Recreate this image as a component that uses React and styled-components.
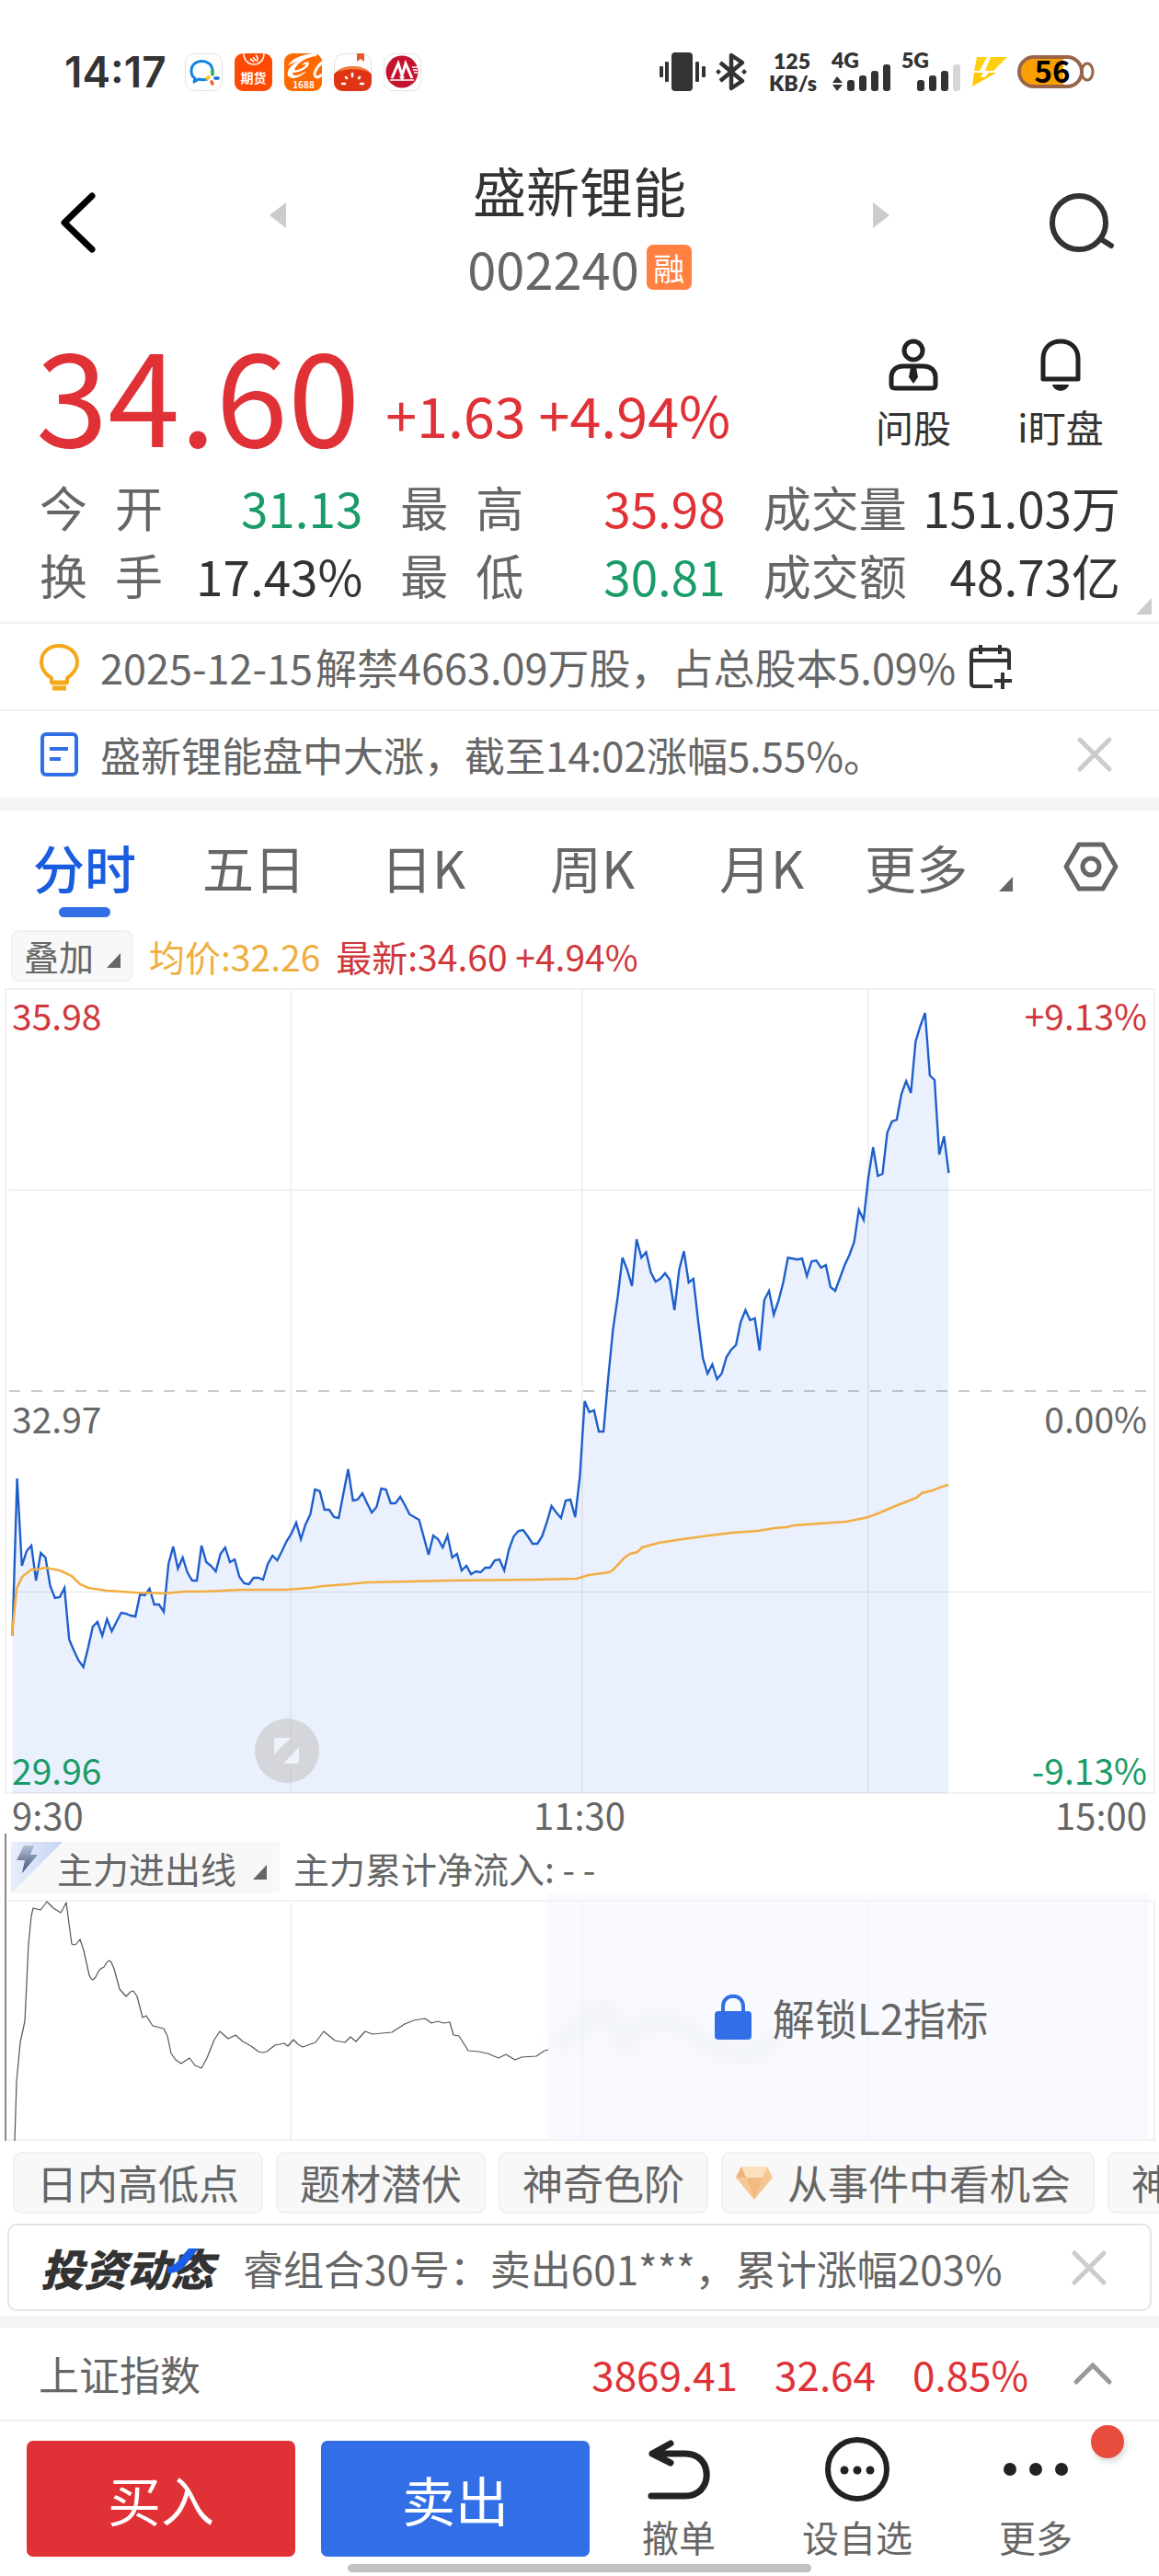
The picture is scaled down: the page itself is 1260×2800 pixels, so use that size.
import React, { useState } from 'react';
import styled, { createGlobalStyle } from 'styled-components';

const RED = '#df3136';
const GREEN = '#1a9c68';
const BLUE = '#326fe6';
const DARK = '#333';
const GREY = '#666';
const LINE = '#f1f1f1';

const GlobalStyle = createGlobalStyle`
  * {
    box-sizing: border-box;
  }

  body {
    margin: 0;
    background: #fff;
    color: ${DARK};
    font-family: 'Noto Sans CJK SC', sans-serif;
    overflow-x: hidden;
  }

  button {
    margin: 0;
    padding: 0;
    border: 0;
    background: none;
    color: inherit;
    font: inherit;
    cursor: pointer;
  }

  a {
    color: inherit;
    text-decoration: none;
  }

  svg {
    display: block;
    flex: none;
    overflow: visible;
  }
`;

const Page = styled.div`
  width: 100%;
  overflow: hidden;
`;

/* ---------- status bar ---------- */

const StatusBar = styled.div`
  display: flex;
  align-items: center;
  justify-content: space-between;
  height: 156px;
  padding: 0 70px;
  margin-bottom: 13px;
`;

const StatusGroup = styled.div`
  display: flex;
  align-items: center;
  gap: ${({ $gap }) => $gap}px;
`;

const Clock = styled.time`
  width: 118px;
  font: 600 46px/56px Inter, sans-serif;
`;

const NetSpeed = styled.div`
  width: 50px;
  margin: 0 8px 0 13px;
  text-align: center;
  font: 800 23px/24px Lato, sans-serif;
`;

const SignalLabel = styled.text`
  font: 800 23px Lato, sans-serif;
  fill: ${DARK};
`;

const IconLabel = styled.text`
  font: 700 ${({ $size }) => $size}px 'Noto Sans CJK SC', sans-serif;
  fill: #fff;
`;

const BatteryLabel = styled.text`
  font: 700 33px 'Noto Sans CJK SC', sans-serif;
  fill: #000;
`;

/* ---------- title ---------- */

const Header = styled.header`
  display: grid;
  grid-template-columns: 180fr 244fr 412fr 244fr 180fr;
  align-items: center;
  justify-items: center;
`;

const BackButton = styled.button`
  justify-self: start;
  padding-left: 64px;
`;

const SearchButton = styled.button`
  justify-self: end;
  padding-right: 48px;
`;

const Title = styled.div`
  padding-top: 6px;
`;

const StockName = styled.h1`
  margin: 0 0 29px;
  font-size: 58px;
  font-weight: 400;
  line-height: 62px;
  text-align: center;
`;

const StockCode = styled.div`
  display: flex;
  align-items: center;
  justify-content: center;
  gap: 8px;
  height: 49px;
  color: ${GREY};
  font-size: 56px;
`;

const Badge = styled.span`
  width: 49px;
  border-radius: 7px;
  background: #ff8041;
  color: #fff;
  font-size: 34px;
  line-height: 49px;
  text-align: center;
`;

/* ---------- quote ---------- */

const Quote = styled.section`
  display: flex;
  align-items: flex-end;
  padding: 40px 27px 0 39px;
  color: ${RED};
`;

const Price = styled.strong`
  font-size: 141px;
  font-weight: 400;
  line-height: 140px;
`;

const Change = styled.div`
  display: flex;
  flex: 1;
  gap: 14px;
  padding-left: 28px;
  font-size: 61px;
  line-height: 90px;
`;

const QuoteAction = styled.button`
  display: flex;
  flex-direction: column;
  align-items: center;
  gap: 18px;
  width: 160px;
  padding-bottom: 12px;
  color: ${DARK};
  font-size: 41px;
  line-height: 40px;
`;

const Stats = styled.dl`
  position: relative;
  display: grid;
  grid-template-columns: 351fr 353fr 388fr;
  column-gap: 41px;
  margin: 19px 0 0;
  padding: 0 42px 14px 43px;
  border-bottom: 2px solid ${LINE};
`;

const Stat = styled.div`
  display: flex;
  justify-content: space-between;
  line-height: 74px;
  white-space: nowrap;

  dt {
    display: flex;
    justify-content: space-between;
    min-width: 134px;
    color: ${GREY};
    font-size: 52px;
  }

  dd {
    margin: 0;
    color: ${({ $color }) => $color || DARK};
    font-size: 53px;
  }
`;

const Corner = styled.svg`
  position: absolute;
  right: 8px;
  bottom: 8px;
`;

/* ---------- notices ---------- */

const Notice = styled.div`
  display: flex;
  align-items: center;
  height: ${({ $dated }) => ($dated ? 95 : 94)}px;
  padding: 0 50px 0 42px;
  border-bottom: ${({ $dated }) => ($dated ? `2px solid ${LINE}` : '0')};
  color: ${GREY};
  font-size: ${({ $dated }) => ($dated ? 45 : 44)}px;
  white-space: nowrap;
`;

const NoticeLink = styled.a`
  display: flex;
  gap: 3px;
  padding: 0 14px 0 22px;
`;

const CloseButton = styled.button`
  margin-left: auto;
`;

const Band = styled.div`
  height: ${({ $size }) => $size}px;
  background: #f4f4f4;
`;

/* ---------- chart ---------- */

const Tabs = styled.nav`
  display: grid;
  grid-template-columns: repeat(5, 184fr) 212fr 128fr;
  padding-top: 26px;
`;

const Tab = styled.button`
  display: flex;
  flex-direction: column;
  align-items: center;
  gap: 9px;
  color: ${({ $active }) => ($active ? '#1a5ce0' : GREY)};
  font-size: 56px;
  font-weight: ${({ $active }) => ($active ? 500 : 400)};
  line-height: 70px;

  &::after {
    content: '';
    width: 56px;
    height: 11px;
    border-radius: 6px;
    background: ${({ $active }) => ($active ? BLUE : 'transparent')};
  }
`;

const MoreTab = styled.button`
  display: flex;
  align-items: center;
  gap: 34px;
  height: 70px;
  padding-left: 20px;
  color: ${GREY};
  font-size: 56px;
  line-height: 70px;
  white-space: nowrap;
`;

const SettingsTab = styled.button`
  display: flex;
  align-items: center;
  justify-content: center;
  height: 70px;
  padding-right: 20px;
`;

const Legend = styled.div`
  display: flex;
  align-items: center;
  gap: 17px;
  margin: 14px 12px 7px;
  font-size: 39px;
  line-height: 56px;
  white-space: nowrap;
`;

const LegendItem = styled.span`
  color: ${({ $color }) => $color};
`;

const Picker = styled.button`
  display: flex;
  align-items: center;
  gap: 14px;
  height: 56px;
  padding: 0 12px;
  border: 2px solid #f1f1f1;
  border-radius: 9px;
  background: #f8f8f8;
  color: ${GREY};
  font-size: 38px;
  line-height: 52px;
`;

const ChartBox = styled.div`
  position: relative;

  > svg {
    width: 100%;
    height: auto;
  }
`;

const Scale = styled.div`
  position: absolute;
  inset: 0 13px;
  display: grid;
  grid-template-rows: 1fr 1fr;
  color: ${GREY};
  font-size: 39px;
  line-height: 40px;
  pointer-events: none;
`;

const ScaleHalf = styled.div`
  display: flex;
  flex-direction: column;
  justify-content: space-between;
  padding: 9px 0 7px;
`;

const ScaleRow = styled.div`
  display: flex;
  justify-content: space-between;
  color: ${({ $color }) => $color};
`;

const ExpandButton = styled.button`
  position: absolute;
  left: 22%;
  bottom: 12px;
`;

const TimeAxis = styled.div`
  display: grid;
  grid-template-columns: 1fr auto 1fr;
  padding: 1px 13px 0;
  color: ${GREY};
  font-size: 40px;
  line-height: 42px;

  span:last-child {
    text-align: right;
  }
`;

const SubPanel = styled.section`
  margin-left: 5px;
  padding-top: 9px;
  border-left: 2px solid #8a8a8a;
`;

const SubHead = styled.div`
  display: flex;
  align-items: center;
  gap: 15px;
  padding: 0 5px 7px;
  color: ${GREY};
  font-size: 39px;
  line-height: 56px;
  white-space: nowrap;
`;

const FlowPicker = styled(Picker)`
  position: relative;
  gap: 18px;
  padding: 0 14px 0 50px;
  border: 0;
  border-radius: 4px;
  font-size: 39px;
`;

const FlowMark = styled.svg`
  position: absolute;
  top: 0;
  left: 0;
`;

const Unlock = styled.button`
  position: absolute;
  inset: -7px 12px 1px 47%;
  display: flex;
  align-items: center;
  justify-content: center;
  gap: 22px;
  padding-left: 6px;
  background: rgba(244, 247, 255, 0.6);
  color: ${GREY};
  font-size: 46px;
`;

/* ---------- chips, feed, index ---------- */

const Chips = styled.div`
  display: flex;
  gap: 14px;
  margin: 12px 0 11px 14px;
  overflow: hidden;
`;

const Chip = styled.button`
  display: flex;
  flex: none;
  align-items: center;
  gap: 16px;
  height: 67px;
  padding: 0 24px 0 ${({ $icon }) => ($icon ? 14 : 24)}px;
  border: 2px solid #f0f0f0;
  border-radius: 9px;
  background: #f8f8f8;
  color: ${GREY};
  font-size: 44px;
  line-height: 63px;
  white-space: nowrap;
`;

const Feed = styled.div`
  display: flex;
  align-items: center;
  gap: 32px;
  height: 95px;
  margin: 0 8px 6px;
  padding: 0 46px 0 34px;
  border: 2px solid #e5e5e5;
  border-radius: 10px;
  color: ${GREY};
  font-size: 44px;
  white-space: nowrap;
`;

const FeedLogo = styled.strong`
  position: relative;
  color: ${DARK};
  font-size: 47px;
  font-style: italic;
  font-weight: 900;

  svg {
    position: absolute;
    top: 14px;
    right: 16px;
  }
`;

const IndexRow = styled.button`
  display: flex;
  align-items: center;
  gap: 40px;
  width: 100%;
  height: 102px;
  padding: 0 50px 0 42px;
  border-bottom: 2px solid ${LINE};
  color: ${RED};
  font-size: 44px;
`;

const IndexName = styled.span`
  flex: 1;
  color: ${GREY};
  text-align: left;
`;

/* ---------- trade bar ---------- */

const TradeBar = styled.footer`
  position: relative;
  display: flex;
  align-items: flex-end;
  gap: 28px;
  padding: 17px 37px 0 29px;
`;

const TradeButton = styled.button`
  flex: 292;
  height: 126px;
  border-radius: 7px;
  background: ${({ $color }) => $color};
  color: #fff;
  font-size: 58px;
`;

const Tools = styled.div`
  display: flex;
  flex: 582;
  margin-left: -28px;
`;

const Tool = styled.button`
  display: flex;
  flex: 1;
  flex-direction: column;
  align-items: center;
  gap: 18px;
  padding-bottom: 2px;
  color: ${GREY};
  font-size: 40px;
  line-height: 40px;
  white-space: nowrap;
`;

const RedDot = styled.span`
  position: absolute;
  top: 4px;
  right: 38px;
  width: 36px;
  height: 36px;
  border-radius: 50%;
  background: #e84c3d;
  box-shadow: 2px 4px 6px rgba(0, 0, 0, 0.15);
`;

const HomeBar = styled.div`
  width: 40%;
  height: 9px;
  margin: 8px auto 3px;
  border-radius: 5px;
  background: #c1c1c1;
`;

/* ---------- data ---------- */

const STATS = [
  { label: '今开', value: '31.13', color: GREEN },
  { label: '最高', value: '35.98', color: RED },
  { label: '成交量', value: '151.03万' },
  { label: '换手', value: '17.43%' },
  { label: '最低', value: '30.81', color: GREEN },
  { label: '成交额', value: '48.73亿' },
];

const TABS = ['分时', '五日', '日K', '周K', '月K'];

// one sample per minute, in chart units from the top edge
const PRICES = [
  704, 533, 628, 612, 606, 644, 614, 619, 650, 663, 662, 652, 708, 720, 731, 738, 717, 694, 689, 704,
  686, 699, 689, 679, 680, 682, 683, 659, 660, 653, 670, 670, 678, 626, 607, 631, 619, 635, 644, 644,
  606, 624, 628, 634, 615, 608, 624, 621, 640, 647, 648, 641, 641, 643, 626, 617, 622, 612, 601, 593,
  581, 599, 583, 572, 545, 547, 567, 567, 575, 576, 549, 523, 557, 556, 549, 560, 570, 564, 544, 545,
  560, 560, 553, 562, 572, 575, 578, 597, 616, 595, 599, 608, 595, 619, 615, 633, 628, 637, 634, 635,
  630, 630, 622, 621, 633, 610, 596, 590, 589, 596, 604, 604, 596, 581, 563, 570, 576, 557, 556, 575,
  531, 449, 461, 459, 482, 482, 423, 371, 336, 293, 306, 324, 273, 293, 287, 309, 319, 316, 310, 317,
  350, 306, 286, 320, 316, 361, 402, 419, 409, 425, 419, 401, 393, 388, 363, 350, 361, 359, 394, 339,
  329, 355, 340, 320, 293, 294, 295, 294, 313, 297, 296, 304, 301, 325, 329, 315, 301, 290, 276, 241,
  252, 206, 173, 204, 202, 157, 145, 143, 115, 101, 114, 58, 41, 27, 95, 100, 181, 161, 201,
];

const AVERAGE =
  '13,704 18,653 24,640 34,632 41,632 49,630 65,633 78,639 87,648 96,652 116,655 147,657 178,658 200,656 220,656 261,654 310,654 337,652 351,650 378,648 398,646 490,644 580,643 627,642 640,638 647,637 662,635 667,632 679,619 685,615 693,613 698,608 716,603 742,599 771,595 796,592 824,590 842,587 855,586 863,584 877,583 920,580 944,575 957,570 971,564 996,554 1002,549 1014,546 1024,542 1031,540';

const FLOW =
  '16,262 18,198 22,155 27,132 31,48 34,18 36,9 40,10 44,11 48,6 51,2 54,5 58,9 66,14 69,9 72,3 75,26 78,48 80,49 83,48 87,43 91,55 97,82 99,86 101,87 104,84 108,76 113,73 117,67 119,66 121,68 124,75 130,97 137,105 142,100 145,99 149,105 155,128 159,126 166,137 178,140 182,148 186,167 191,174 197,178 206,172 212,180 219,183 225,172 233,152 239,143 248,151 256,147 264,154 273,159 281,165 285,166 290,165 299,158 309,156 313,159 319,152 324,157 329,160 343,155 352,143 364,153 375,155 381,149 387,154 397,143 405,146 426,144 440,135 450,131 462,129 469,134 476,132 482,134 489,133 493,147 499,148 509,164 520,165 530,167 542,172 550,168 560,174 567,171 583,170 592,164 596,163';

const PRICE_LINE = PRICES.map((y, i) => `${(13.5 + i * 5.141).toFixed(1)},${y}`).join(' ');

/* ---------- drawings ---------- */

const Triangle = ({ height = 26 }) => (
  <svg width="15" height={height} viewBox={`0 0 15 ${height}`}>
    <path d={`M15 ${height - 16}V${height}H0Z`} fill={GREY} />
  </svg>
);

const Cross = () => (
  <svg width="40" height="38" viewBox="0 0 40 38" fill="none" stroke="#ccc" strokeWidth="5" strokeLinecap="round">
    <path d="M4 3L36 35M36 3L4 35" />
  </svg>
);

const ChatApp = () => (
  <svg width="41" height="41" viewBox="0 0 41 41" fill="none">
    <rect x="0.5" y="0.5" width="40" height="40" rx="10" fill="#fff" stroke="#e2e2e2" />
    <path d="M30 19C30 5 7 5 7 19C7 23 9 26 11 27L10 31L15 28C18 29 21 29 24 28" stroke="#1283e0" strokeWidth="3" strokeLinecap="round" strokeLinejoin="round" />
    <path d="M30 19V23" stroke="#2bb24c" strokeWidth="3.6" strokeLinecap="round" />
    <path d="M33 27H36" stroke="#0f6fe0" strokeWidth="3.6" strokeLinecap="round" />
    <path d="M29 31L30 33" stroke="#f4612d" strokeWidth="3.6" strokeLinecap="round" />
    <path d="M24 27L26 26" stroke="#fcc419" strokeWidth="3.6" strokeLinecap="round" />
  </svg>
);

const FuturesApp = () => (
  <svg width="41" height="41" viewBox="0 0 41 41" fill="none">
    <rect width="41" height="41" rx="9" fill="#ff4a04" />
    <path d="M10 0C10 16 32 16 32 0" stroke="#fff" strokeWidth="1.6" />
    <path d="M17 6L21 9M20 4L23 8M23 2C26 4 25 7 24 9" stroke="#fff" strokeWidth="1.6" />
    <IconLabel x="20.5" y="32" textAnchor="middle" $size={14}>期货</IconLabel>
  </svg>
);

const MarketApp = () => (
  <svg width="41" height="41" viewBox="0 0 41 41" fill="none">
    <rect width="41" height="41" rx="9" fill="#ff6a00" />
    <path d="M35 0C22 0 9 5 4 13C9 11 12 9 15 8C8 12 2 19 4 24C7 30 19 26 24 19C17 24 9 26 9 21C18 21 27 15 27 11C27 8 21 9 19 13C21 12 24 11 23 13C21 16 14 19 11 18C14 10 24 4 35 3Z" fill="#fff" />
    <path d="M41 10C36 14 31 22 34 25C36 27 39 25 41 23" stroke="#fff" strokeWidth="3" />
    <IconLabel x="21" y="38" textAnchor="middle" $size={10}>1688</IconLabel>
  </svg>
);

const TomatoApp = () => (
  <svg width="41" height="41" viewBox="0 0 41 41" fill="none">
    <rect x="0.5" y="0.5" width="40" height="40" rx="10" fill="#fff" stroke="#e2e2e2" />
    <path d="M25 0H33V9L29 6L25 9Z" fill="#e8592c" />
    <path d="M0 23C8 11 33 11 41 23V31C41 37 37 41 31 41H10C4 41 0 37 0 31Z" fill="#e03514" />
    <path d="M2 21C10 12 31 12 39 21C30 16 11 16 2 21Z" fill="#f58142" />
    <path d="M9 33H12M13 26L14 27M20 22V25M28 26L27 27M32 33H29" stroke="#fff" strokeWidth="2.6" strokeLinecap="round" />
  </svg>
);

const BankApp = () => (
  <svg width="41" height="41" viewBox="0 0 41 41" fill="none">
    <rect x="0.5" y="0.5" width="40" height="40" rx="10" fill="#fff" stroke="#e2e2e2" />
    <circle cx="20" cy="20" r="17.5" fill="#c4122f" />
    <path d="M9 27L16 11L20 24L24 11L31 27" stroke="#fff" strokeWidth="3" />
    <path d="M7 29H33M31 15H37M32 18H37M33 21H37" stroke="#fff" strokeWidth="1.6" />
    <path d="M17 25L20 30L23 25" fill="#fff" />
  </svg>
);

const Vibrate = () => (
  <svg width="50" height="42" viewBox="0 0 50 42" fill={DARK}>
    <rect x="13" width="23" height="42" rx="4" />
    <rect y="15" width="4" height="12" rx="1" />
    <rect x="6" y="10" width="4" height="22" rx="1" />
    <rect x="39" y="10" width="4" height="22" rx="1" />
    <rect x="46" y="15" width="4" height="12" rx="1" />
  </svg>
);

const Bluetooth = () => (
  <svg width="36" height="42" viewBox="0 0 36 42" fill="none" stroke={DARK} strokeWidth="4.5" strokeLinejoin="round">
    <path d="M6 11L30 31L18 39V3L30 11L6 31" />
    <path d="M4 18L7 21L4 24L1 21ZM32 18L35 21L32 24L29 21Z" fill={DARK} stroke="none" />
  </svg>
);

const Signal = ({ label, arrows, weak }) => (
  <svg width="66" height="42" viewBox="0 0 66 42" fill={DARK}>
    <SignalLabel x="0" y="17">{label}</SignalLabel>
    {arrows && <path d="M1 33L6 26L12 33ZM1 35L6 42L12 35Z" />}
    <rect x="17" y="30" width="8" height="12" rx="3" />
    <rect x="30" y="25" width="8" height="17" rx="3" />
    <rect x="43" y="20" width="8" height="22" rx="3" />
    <rect x="56" y="13" width="8" height="29" rx="3" fill={weak ? '#d6d6d6' : DARK} />
  </svg>
);

const Charging = () => (
  <svg width="40" height="34" viewBox="0 0 40 34">
    <path d="M6 1H17L9 16H3ZM21 1H39L24 16H15Z" fill="#ffd012" />
    <path d="M3 18H13L10 23H15L19 18H27L1 33Z" fill="#ffc801" />
  </svg>
);

const Battery = () => (
  <svg width="84" height="36" viewBox="0 0 84 36" fill="none">
    <path d="M18 4H50V32H18C-1 32-1 4 18 4Z" fill="#fa9f00" />
    <rect x="2" y="2" width="68" height="32" rx="16" stroke="#9a6448" strokeWidth="4" />
    <ellipse cx="76" cy="18" rx="6" ry="9" stroke="#9a6448" strokeWidth="3" />
    <BatteryLabel x="38" y="30" textAnchor="middle">56</BatteryLabel>
  </svg>
);

const Adviser = () => (
  <svg width="54" height="57" viewBox="0 0 54 57" fill="none" stroke="#222" strokeWidth="5">
    <circle cx="27" cy="13" r="10" />
    <path d="M16 30H38C46 30 51 35 51 42V50C51 53 50 54 47 54H7C4 54 3 53 3 50V42C3 35 8 30 16 30Z" />
    <path d="M24 31H30L32 42L27 49L22 42Z" fill="#222" stroke="none" />
  </svg>
);

const Bell = () => (
  <svg width="44" height="57" viewBox="0 0 44 57" fill="none" stroke="#222" strokeWidth="5">
    <path d="M3 44V22C3 10 11 3 22 3S41 10 41 22V44Z" strokeLinejoin="round" />
    <path d="M13 50H31C29 59 15 59 13 50Z" fill="#222" stroke="none" />
  </svg>
);

const Bulb = () => (
  <svg width="45" height="52" viewBox="0 0 45 52" fill="none" stroke="#f5a81c" strokeWidth="4">
    <path d="M14 43V38C6 33 3 28 3 21C3 10 11 3 22 3S42 10 42 21C42 28 38 33 31 38V43Z" strokeLinejoin="round" />
    <path d="M14 43H31M15 49H30" strokeWidth="5" />
  </svg>
);

const Note = () => (
  <svg width="45" height="50" viewBox="0 0 45 50" fill="none" stroke={BLUE} strokeWidth="4">
    <rect x="4" y="3" width="37" height="44" rx="4" />
    <path d="M12 19H32M12 30H24" />
  </svg>
);

const CalendarPlus = () => (
  <svg width="48" height="50" viewBox="0 0 48 50" fill="none" stroke={DARK} strokeWidth="4">
    <path d="M26 46H7C4 46 3 45 3 42V10C3 7 4 6 7 6H40C43 6 44 7 44 10V28" />
    <path d="M3 18H44M13 1V11M34 1V11M37 31V49M28 40H47" />
  </svg>
);

const FlowBadge = () => (
  <FlowMark width="56" height="56" viewBox="0 0 56 56">
    <defs>
      <linearGradient id="fade" x1="0" y1="0" x2="1" y2="0">
        <stop offset="0" stopColor="#e8eefb" />
        <stop offset="1" stopColor="#c6d5f5" />
      </linearGradient>
      <linearGradient id="bolt" x1="0" y1="0" x2="0" y2="1">
        <stop offset="0" stopColor="#b4bfd6" />
        <stop offset="1" stopColor="#3c4f77" />
      </linearGradient>
    </defs>
    <path d="M0 0H56L0 56Z" fill="url(#fade)" />
    <path d="M14 4H25L21 14H29L12 34L15 20H6Z" fill="url(#bolt)" />
  </FlowMark>
);

const Lock = () => (
  <svg width="42" height="50" viewBox="0 0 42 50" fill="none">
    <path d="M10 22V14C10 -1 32 -1 32 14V22" stroke={BLUE} strokeWidth="4" />
    <rect x="1" y="19" width="40" height="31" rx="4" fill={BLUE} />
  </svg>
);

const Gem = () => (
  <svg width="40" height="37" viewBox="0 0 40 37">
    <path d="M6 1H34L40 13L20 37L0 13Z" fill="#f5c795" />
    <path d="M6 1H34L29 13H11Z" fill="#fbe0bf" />
    <path d="M11 13H29L20 37Z" fill="#f3bb83" />
    <path d="M0 13L11 13L6 1Z" fill="#eeb47b" />
  </svg>
);

const PriceChart = () => (
  <svg viewBox="0 0 1260 876" fill="none" role="img" aria-label="分时走势">
    <g stroke="#f1f1f1" strokeWidth="2">
      <rect x="6" y="1" width="1249" height="874" />
      <path d="M316 0V876M633 0V876M944 0V876" />
    </g>
    <path d="M10 219.5H1251M10 656.5H1251" stroke="#e4e4e4" />
    <path d="M10 438H1251" stroke="#ccc" strokeWidth="2" strokeDasharray="12 12" />
    <polygon points={`13.5,875 ${PRICE_LINE} 1031.4,875`} fill="rgba(50, 111, 246, 0.1)" />
    <polyline points={PRICE_LINE} stroke="#1f5fcb" strokeWidth="2.4" />
    <polyline points={AVERAGE} stroke="#f2ae42" strokeWidth="2.6" />
  </svg>
);

const FlowChart = () => (
  <svg viewBox="7 0 1253 262" fill="none" role="img" aria-label="主力进出线">
    <defs>
      <filter id="soft" x="-20%" y="-40%" width="140%" height="180%">
        <feGaussianBlur stdDeviation="8" />
      </filter>
    </defs>
    <g stroke="#f1f1f1" strokeWidth="2">
      <path d="M7 1H1255V261H7M316 0V262M633 0V262M944 0V262" />
    </g>
    <polyline points={FLOW} stroke="#555" strokeWidth="1.2" strokeLinejoin="round" />
    <polyline
      points="604,158 628,145 645,120 658,118 680,158 705,130 740,135 770,158 810,170 850,150"
      stroke="#c4c6cc"
      strokeWidth="18"
      opacity="0.3"
      filter="url(#soft)"
    />
  </svg>
);

const App = () => {
  const [tab, setTab] = useState('分时');

  return (
    <Page>
      <GlobalStyle />

      <StatusBar>
        <StatusGroup $gap={13}>
          <Clock>14:17</Clock>
          <ChatApp />
          <FuturesApp />
          <MarketApp />
          <TomatoApp />
          <BankApp />
        </StatusGroup>
        <StatusGroup $gap={10}>
          <Vibrate />
          <Bluetooth />
          <NetSpeed>125 KB/s</NetSpeed>
          <Signal label="4G" arrows />
          <Signal label="5G" weak />
          <Charging />
          <Battery />
        </StatusGroup>
      </StatusBar>

      <Header>
        <BackButton aria-label="返回">
          <svg width="42" height="68" viewBox="0 0 42 68" fill="none" stroke="#000" strokeWidth="7" strokeLinecap="round" strokeLinejoin="round">
            <path d="M36 5L6 34L36 63" />
          </svg>
        </BackButton>
        <button aria-label="上一只">
          <svg width="18" height="46" viewBox="0 0 18 46">
            <path d="M18 1V29L0 15Z" fill="#ccc" />
          </svg>
        </button>
        <Title>
          <StockName>盛新锂能</StockName>
          <StockCode>
            002240<Badge>融</Badge>
          </StockCode>
        </Title>
        <button aria-label="下一只">
          <svg width="18" height="46" viewBox="0 0 18 46">
            <path d="M0 1V29L18 15Z" fill="#ccc" />
          </svg>
        </button>
        <SearchButton aria-label="搜索">
          <svg width="72" height="66" viewBox="0 0 72 66" fill="none" stroke={DARK} strokeWidth="6" strokeLinecap="round">
            <circle cx="33" cy="33" r="29" />
            <path d="M57 51L68 58" />
          </svg>
        </SearchButton>
      </Header>

      <Quote>
        <Price>34.60</Price>
        <Change>
          <span>+1.63</span>
          <span>+4.94%</span>
        </Change>
        <QuoteAction>
          <Adviser />
          问股
        </QuoteAction>
        <QuoteAction>
          <Bell />
          i盯盘
        </QuoteAction>
      </Quote>

      <Stats>
        {STATS.map(({ label, value, color }) => (
          <Stat key={label} $color={color}>
            <dt>
              {[...label].map((char) => (
                <span key={char}>{char}</span>
              ))}
            </dt>
            <dd>{value}</dd>
          </Stat>
        ))}
        <Corner width="17" height="18" viewBox="0 0 17 18">
          <path d="M17 0V18H0Z" fill="#ccc" />
        </Corner>
      </Stats>

      <Notice $dated>
        <Bulb />
        <NoticeLink href="#unlock">
          <span>2025-12-15</span>
          <span>解禁4663.09万股，占总股本5.09%</span>
        </NoticeLink>
        <button aria-label="加入日历">
          <CalendarPlus />
        </button>
      </Notice>
      <Notice>
        <Note />
        <NoticeLink href="#news">盛新锂能盘中大涨，截至14:02涨幅5.55%。</NoticeLink>
        <CloseButton aria-label="关闭">
          <Cross />
        </CloseButton>
      </Notice>
      <Band $size={14} />

      <Tabs>
        {TABS.map((name) => (
          <Tab key={name} $active={name === tab} onClick={() => setTab(name)}>
            {name}
          </Tab>
        ))}
        <MoreTab>
          更多
          <Triangle height={54} />
        </MoreTab>
        <SettingsTab aria-label="设置">
          <svg width="60" height="56" viewBox="0 0 60 56" fill="none" stroke={GREY} strokeWidth="5" strokeLinejoin="round">
            <path d="M17 4H43L57 28L43 52H17L3 28Z" />
            <circle cx="30" cy="28" r="9" />
          </svg>
        </SettingsTab>
      </Tabs>

      <Legend>
        <Picker>
          叠加
          <Triangle />
        </Picker>
        <LegendItem $color="#efae3f">均价:32.26</LegendItem>
        <LegendItem $color="#cf373b">最新:34.60 +4.94%</LegendItem>
      </Legend>

      <ChartBox>
        <PriceChart />
        <Scale>
          <ScaleHalf>
            <ScaleRow $color="#cf373b">
              <span>35.98</span>
              <span>+9.13%</span>
            </ScaleRow>
          </ScaleHalf>
          <ScaleHalf>
            <ScaleRow>
              <span>32.97</span>
              <span>0.00%</span>
            </ScaleRow>
            <ScaleRow $color={GREEN}>
              <span>29.96</span>
              <span>-9.13%</span>
            </ScaleRow>
          </ScaleHalf>
        </Scale>
        <ExpandButton aria-label="全屏">
          <svg width="70" height="70" viewBox="0 0 70 70">
            <circle cx="35" cy="35" r="35" fill="rgba(196, 196, 196, 0.6)" />
            <path d="M22 21H39L21 39V22ZM48 31V47Q48 49 46 49H31Z" fill="#f0f2fa" />
          </svg>
        </ExpandButton>
      </ChartBox>
      <TimeAxis>
        <span>9:30</span>
        <span>11:30</span>
        <span>15:00</span>
      </TimeAxis>

      <SubPanel>
        <SubHead>
          <FlowPicker>
            <FlowBadge />
            <span>主力进出线</span>
            <Triangle />
          </FlowPicker>
          <span>主力累计净流入: - -</span>
        </SubHead>
        <ChartBox>
          <FlowChart />
          <Unlock>
            <Lock />
            解锁L2指标
          </Unlock>
        </ChartBox>
      </SubPanel>

      <Chips>
        <Chip>日内高低点</Chip>
        <Chip>题材潜伏</Chip>
        <Chip>神奇色阶</Chip>
        <Chip $icon>
          <Gem />
          从事件中看机会
        </Chip>
        <Chip>神奇电波</Chip>
      </Chips>

      <Feed>
        <FeedLogo>
          投资动态
          <svg width="34" height="27" viewBox="0 0 34 27">
            <path d="M34 0H23L11 14Q7 19 0 20V27Q13 27 19 19Z" fill="#1a5ce6" />
          </svg>
        </FeedLogo>
        <a href="#feed">睿组合30号：卖出601***，累计涨幅203%</a>
        <CloseButton aria-label="关闭">
          <Cross />
        </CloseButton>
      </Feed>
      <Band $size={12} />

      <IndexRow>
        <IndexName>上证指数</IndexName>
        <span>3869.41</span>
        <span>32.64</span>
        <span>0.85%</span>
        <svg width="52" height="26" viewBox="-8 0 52 26" fill="none" stroke="#999" strokeWidth="5" strokeLinecap="round">
          <path d="M4 22L22 4L40 22" />
        </svg>
      </IndexRow>

      <TradeBar>
        <TradeButton $color={RED}>买入</TradeButton>
        <TradeButton $color={BLUE}>卖出</TradeButton>
        <Tools>
          <Tool>
            <svg width="70" height="70" viewBox="0 0 70 70" fill="none" stroke="#222" strokeWidth="7" strokeLinecap="round" strokeLinejoin="round">
              <path d="M26 7L6 18L26 28M6 18H42C73 18 73 64 42 64H5" />
            </svg>
            撤单
          </Tool>
          <Tool>
            <svg width="70" height="70" viewBox="0 0 70 70" fill="#222">
              <circle cx="35" cy="35" r="32" fill="none" stroke="#222" strokeWidth="6" />
              <circle cx="21" cy="36" r="4.5" />
              <circle cx="35" cy="36" r="4.5" />
              <circle cx="49" cy="36" r="4.5" />
            </svg>
            设自选
          </Tool>
          <Tool>
            <svg width="70" height="70" viewBox="0 0 70 70" fill="#222">
              <circle cx="7" cy="35" r="7" />
              <circle cx="35" cy="35" r="7" />
              <circle cx="63" cy="35" r="7" />
            </svg>
            更多
          </Tool>
        </Tools>
        <RedDot />
      </TradeBar>
      <HomeBar />
    </Page>
  );
};

export default App;
